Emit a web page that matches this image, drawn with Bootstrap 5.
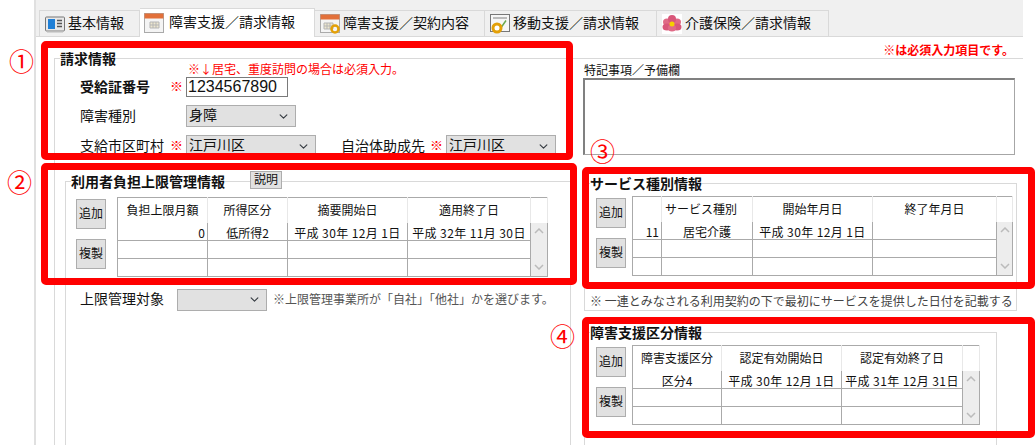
<!DOCTYPE html>
<html lang="ja">
<head>
<meta charset="utf-8">
<title>障害支援／請求情報</title>
<link href="https://cdn.jsdelivr.net/npm/bootstrap@5.3.0/dist/css/bootstrap.min.css" rel="stylesheet">
<style>
html,body{margin:0;height:445px;overflow:hidden;background:#fff}
body{font-family:"Noto Sans CJK JP","Liberation Sans",sans-serif;font-size:14px;line-height:16px;color:#111}
.stage{width:1035px;height:445px;overflow:hidden}
.frame{margin-left:34px;width:989px;height:445px;border-left:2px solid #e0e0e0}
.tabbar{height:37px;background:#f0f0f0;border-bottom:1px solid #d9d9d9;padding-left:3px}
.tabx{height:26px;margin-top:10px;background:#f0f0f0;border:1px solid #d9d9d9;border-bottom:0;border-left-width:0;padding-left:5px;gap:3px;white-space:nowrap}
.tabx:first-child{border-left-width:1px}
.tabx span{margin-bottom:3px}
.tabx.on{height:29px;margin-top:8px;background:#fff;border-left-width:0;padding-left:4px;gap:5px;align-items:flex-start!important;padding-top:4px;position:relative;z-index:1}
.tabx.on span{margin:0}
.tabx svg{flex:none}
.w1{width:101px}.w2{width:175px}.w3{width:170px}.w4{width:172px}.w5{width:172px}
fieldset.fset{border:1px solid #d9d9d9;padding:0;margin:0;min-width:0}
fieldset.fset>legend{float:none;width:auto;font-size:14px;line-height:16px;font-weight:700;margin:0;padding:0}
fieldset.outer{margin:13px 0 0 18px;border-right:0;border-bottom:0;position:relative}
fieldset.outer>legend{margin-left:5px}
.colL{width:516px;flex:none}
.colR{flex:1 1 auto;min-width:0;padding-left:12px}
.reqtop{position:absolute;right:9px;top:-23px;color:#f00;font-size:12px;font-weight:700;line-height:14px}
.rednote{color:#f00;font-size:12px;line-height:14px;margin:-4px 0 0 133px}
.rowf{padding-left:25px}
.rowf.r1{height:20px;margin-top:1px}
.rowf.r2,.rowf.r3{height:22px;margin-top:8px}
.lab{width:90px;flex:none;margin-bottom:3px}
.kome{width:16px;flex:none;color:#f00;font-size:13px;margin-bottom:2px}
.ctl-in.form-control{width:102px;height:20px;min-height:0;border:1px solid #7a7a7a;border-radius:0;padding:0 1px;font-size:16px;line-height:18px;font-family:"Liberation Sans",sans-serif;color:#111}
.ctl-sel.form-select{height:22px;border:1px solid #adadad;border-radius:0;background-color:#e1e1e1;padding:0 14px 3px 2px;font-size:14px;line-height:17px;color:#111;background-position:right 6px center;background-size:11px 9px;font-family:inherit}
.s110{width:110px}.s130{width:130px}.s90{width:90px}
.lab2{margin-left:25px;width:89px;flex:none;margin-bottom:3px}
.kome2{width:16px;flex:none;color:#f00;font-size:13px;margin-bottom:2px}
fieldset.sec2{margin:16px 0 0 10px;height:300px;position:relative}
fieldset.sec2>legend{margin-left:5px}
.explain.btn{position:absolute;left:184px;top:-18px;width:32px;height:18px;padding:0 0 2px;font-size:11px;line-height:14px}
.btn-win.btn{background:#e1e1e1;border:1px solid #adadad;border-radius:0;color:#111;font-size:12px;line-height:14px;--bs-btn-hover-bg:#e1e1e1}
.btn-big.btn{width:30px;height:30px;padding:0 0 2px}
.btns{width:41px;flex:none;margin-left:10px;padding-top:7px;gap:10px}
.btns.nar{width:36px;margin-left:11px}
.sec-row.lower{padding-top:3px}
.gridw{border:1px solid #aaa;background:#fff;margin-top:5px;border-collapse:collapse;table-layout:fixed;font-size:12px;align-self:flex-start}
.gridw th,.gridw td{padding:0;font-weight:400;text-align:center;white-space:nowrap;border-right:1px solid #aaa;border-bottom:1px solid #aaa;overflow:hidden}
.gridw th{height:25px;border-bottom:0;border-right-color:#e8e8e8;line-height:20px}
.gridw th.lft{padding-right:12px}
.gridw td{height:18px;line-height:14px;color:#111;vertical-align:bottom}
.gridw td.rt{text-align:right;padding-right:2px}
.gridw td.dt{letter-spacing:.4px}
.gridw .bar{background:#ededed;border:0;vertical-align:top;position:relative}
.barin{height:52px;padding:5px 0}
.g2{width:431px}.g3{width:381px}.g4{width:348px}
.capt{margin:-3px 0 0 1px;font-size:12px;line-height:14px;height:14px;color:#111}
.memo.form-control{display:block;width:432px;height:77px;border:1px solid #a6a6a6;border-top:2px solid #808080;border-left:2px solid #808080;border-radius:0;padding:0;margin-top:1px;resize:none}
fieldset.sec3{width:433px;height:136px;margin:20px 0 0 1px}
fieldset.sec3>legend,fieldset.sec4>legend{margin-left:5px}
.note3{font-size:12px;line-height:14px;color:#444;margin:11px 0 0 5px;white-space:nowrap}
fieldset.sec4{width:413px;height:200px;margin:13px 0 0 1px}
.sec-row{height:92px}
.row-limit{height:21px;margin:8px 0 0 14px}
.lab3{width:97px;flex:none;margin-bottom:3px}
.note2{font-size:12px;color:#555;margin-left:6px;white-space:nowrap;margin-bottom:2px}
.mark-box{position:absolute;border:7px solid #f00;border-radius:5px;pointer-events:none}
.b1{left:41px;top:41px;width:532px;height:119px}
.b2{left:41px;top:163px;width:536px;height:122px}
.b3{left:582px;top:167px;width:453px;height:122px}
.b4{left:582px;top:317px;width:453px;height:121px}
.circ{position:absolute;color:#f00;font-size:25px;line-height:24px;font-family:"Noto Sans CJK JP",sans-serif}
</style>
</head>
<body>
<div class="stage position-relative">
 <div class="frame">
  <div class="tabbar d-flex">
   <div class="tabx w1 d-flex align-items-center">
    <svg width="20" height="20" viewBox="0 0 20 20"><rect x="0.500" y="3" width="19" height="14" rx="1" fill="#e8e8e8" stroke="#777"/><path d="M2 17.500h16" stroke="#bbb" stroke-width="2"/><rect x="3" y="5" width="7" height="10" fill="#1f7fd6"/><path d="M12 6.500h5M12 9.500h5M12 12.500h5" stroke="#555" stroke-width="1.500"/></svg>
    <span>基本情報</span>
   </div>
   <div class="tabx on w2 d-flex">
    <svg width="20" height="20" viewBox="0 0 20 20"><rect x=".5" y=".5" width="19" height="19" fill="#f4f4f4" stroke="#aaa"/><rect x=".5" y=".5" width="19" height="5" fill="#e2703a"/><path d="M6 9h9v6H6zM6 12h9M9 9v6M12 9v6" fill="#ece6cf" stroke="#b5b5b5"/></svg>
    <span>障害支援／請求情報</span>
   </div>
   <div class="tabx w3 d-flex align-items-center">
    <svg width="20" height="20" viewBox="0 0 20 20"><rect x=".5" y=".5" width="19" height="18" fill="#f4f4f4" stroke="#aaa"/><rect x=".5" y=".5" width="19" height="5" fill="#e2703a"/><path d="M4 9h9v6H4zM4 12h9M7 9v6M10 9v6" fill="#ece6cf" stroke="#b5b5b5"/><circle cx="15" cy="15" r="3.500" fill="none" stroke="#e3a008" stroke-width="2.500"/></svg>
    <span>障害支援／契約内容</span>
   </div>
   <div class="tabx w4 d-flex align-items-center">
    <svg width="20" height="20" viewBox="0 0 20 20"><rect x=".5" y=".5" width="19" height="17" fill="#f6f6f6" stroke="#777"/><rect x="3" y="3" width="14" height="2" fill="#bbb"/><path d="M9 10l2.500 3L16 6.500" fill="none" stroke="#6aa84f" stroke-width="1.500"/><circle cx="7" cy="14" r="4" fill="#fff" stroke="#e3a008" stroke-width="3"/></svg>
    <span>移動支援／請求情報</span>
   </div>
   <div class="tabx w5 d-flex align-items-center">
    <svg width="20" height="20" viewBox="0 0 20 20"><rect width="20" height="20" fill="#fff"/><ellipse cx="5" cy="8" rx="4" ry="3.500" fill="#e06a86"/><ellipse cx="15" cy="8" rx="4" ry="3.500" fill="#e06a86"/><ellipse cx="10" cy="5" rx="4" ry="4" fill="#d9577a"/><ellipse cx="5" cy="13" rx="4.500" ry="3.500" fill="#d9577a"/><ellipse cx="15" cy="13" rx="4.500" ry="3.500" fill="#d9577a"/><ellipse cx="10" cy="14" rx="4" ry="3.500" fill="#e06a86"/><circle cx="10" cy="10" r="2.500" fill="#f5d000"/></svg>
    <span>介護保険／請求情報</span>
   </div>
  </div>

  <fieldset class="fset outer">
   <legend>請求情報</legend>
   <div class="reqtop">※は必須入力項目です。</div>
   <div class="d-flex">
    <div class="colL">
     <div class="rednote">※↓居宅、重度訪問の場合は必須入力。</div>
     <div class="rowf r1 d-flex align-items-center">
      <span class="lab fw-bold">受給証番号</span><span class="kome">※</span>
      <input class="form-control ctl-in" type="text" value="1234567890" aria-label="受給証番号">
     </div>
     <div class="rowf r2 d-flex align-items-center">
      <span class="lab">障害種別</span><span class="kome"></span>
      <select class="form-select ctl-sel s110" aria-label="障害種別"><option>身障</option></select>
     </div>
     <div class="rowf r3 d-flex align-items-center">
      <span class="lab">支給市区町村</span><span class="kome">※</span>
      <select class="form-select ctl-sel s130" aria-label="支給市区町村"><option>江戸川区</option></select>
      <span class="lab2">自治体助成先</span><span class="kome2">※</span>
      <select class="form-select ctl-sel s110" aria-label="自治体助成先"><option>江戸川区</option></select>
     </div>
     <fieldset class="fset sec2">
      <legend>利用者負担上限管理情報</legend>
      <button type="button" class="btn btn-win explain">説明</button>
      <div class="d-flex sec-row lower">
       <div class="btns d-flex flex-column">
        <button type="button" class="btn btn-win btn-big">追加</button>
        <button type="button" class="btn btn-win btn-big">複製</button>
       </div>
       <table class="gridw g2">
        <colgroup><col style="width:90px"><col style="width:80px"><col style="width:120px"><col style="width:123px"><col></colgroup>
        <tr><th>負担上限月額</th><th>所得区分</th><th>摘要開始日</th><th>適用終了日</th><th></th></tr>
        <tr><td class="rt">0</td><td>低所得2</td><td class="dt">平成 30年 12月 1日</td><td class="dt">平成 32年 11月 30日</td>
         <td class="bar" rowspan="3"><div class="barin d-flex flex-column justify-content-between align-items-center"><svg width="10" height="6" viewBox="0 0 10 6"><path d="M1 5l4-4 4 4" fill="none" stroke="#bbb" stroke-width="1.500"/></svg><svg width="10" height="6" viewBox="0 0 10 6"><path d="M1 1l4 4 4-4" fill="none" stroke="#bbb" stroke-width="1.500"/></svg></div></td></tr>
        <tr><td></td><td></td><td></td><td></td></tr>
        <tr><td></td><td></td><td></td><td></td></tr>
       </table>
      </div>
      <div class="row-limit d-flex align-items-center">
       <span class="lab3">上限管理対象</span>
       <select class="form-select ctl-sel s90" aria-label="上限管理対象"><option></option></select>
       <span class="note2">※上限管理事業所が「自社」「他社」かを選びます。</span>
      </div>
     </fieldset>
    </div>
    <div class="colR">
     <div class="capt">特記事項／予備欄</div>
     <textarea class="form-control memo" aria-label="特記事項／予備欄"></textarea>
     <fieldset class="fset sec3">
      <legend>サービス種別情報</legend>
      <div class="d-flex sec-row">
       <div class="btns nar d-flex flex-column">
        <button type="button" class="btn btn-win btn-big">追加</button>
        <button type="button" class="btn btn-win btn-big">複製</button>
       </div>
       <table class="gridw g3">
        <colgroup><col style="width:29px"><col style="width:91px"><col style="width:120px"><col style="width:124px"><col></colgroup>
        <tr><th></th><th class="lft">サービス種別</th><th>開始年月日</th><th>終了年月日</th><th></th></tr>
        <tr><td class="rt">11</td><td>居宅介護</td><td class="dt">平成 30年 12月 1日</td><td></td>
         <td class="bar" rowspan="3"><div class="barin d-flex flex-column justify-content-between align-items-center"><svg width="10" height="6" viewBox="0 0 10 6"><path d="M1 5l4-4 4 4" fill="none" stroke="#bbb" stroke-width="1.500"/></svg><svg width="10" height="6" viewBox="0 0 10 6"><path d="M1 1l4 4 4-4" fill="none" stroke="#bbb" stroke-width="1.500"/></svg></div></td></tr>
        <tr><td></td><td></td><td></td><td></td></tr>
        <tr><td></td><td></td><td></td><td></td></tr>
       </table>
      </div>
      <div class="note3">※ 一連とみなされる利用契約の下で最初にサービスを提供した日付を記載する</div>
     </fieldset>
     <fieldset class="fset sec4">
      <legend>障害支援区分情報</legend>
      <div class="d-flex sec-row">
       <div class="btns nar d-flex flex-column">
        <button type="button" class="btn btn-win btn-big">追加</button>
        <button type="button" class="btn btn-win btn-big">複製</button>
       </div>
       <table class="gridw g4">
        <colgroup><col style="width:89px"><col style="width:120px"><col style="width:121px"><col></colgroup>
        <tr><th>障害支援区分</th><th>認定有効開始日</th><th>認定有効終了日</th><th></th></tr>
        <tr><td>区分4</td><td class="dt">平成 30年 12月 1日</td><td class="dt">平成 31年 12月 31日</td>
         <td class="bar" rowspan="3"><div class="barin d-flex flex-column justify-content-between align-items-center"><svg width="10" height="6" viewBox="0 0 10 6"><path d="M1 5l4-4 4 4" fill="none" stroke="#bbb" stroke-width="1.500"/></svg><svg width="10" height="6" viewBox="0 0 10 6"><path d="M1 1l4 4 4-4" fill="none" stroke="#bbb" stroke-width="1.500"/></svg></div></td></tr>
        <tr><td></td><td></td><td></td></tr>
        <tr><td></td><td></td><td></td></tr>
       </table>
      </div>
     </fieldset>
    </div>
   </div>
  </fieldset>
 </div>

 <div class="mark-box b1"></div>
 <div class="mark-box b2"></div>
 <div class="mark-box b3"></div>
 <div class="mark-box b4"></div>
 <span class="circ" style="left:9px;top:48px">①</span>
 <span class="circ" style="left:7px;top:169px">②</span>
 <span class="circ" style="left:590px;top:138px">③</span>
 <span class="circ" style="left:550px;top:323px">④</span>
</div>
<script src="https://cdn.jsdelivr.net/npm/bootstrap@5.3.0/dist/js/bootstrap.bundle.min.js"></script>
</body>
</html>
